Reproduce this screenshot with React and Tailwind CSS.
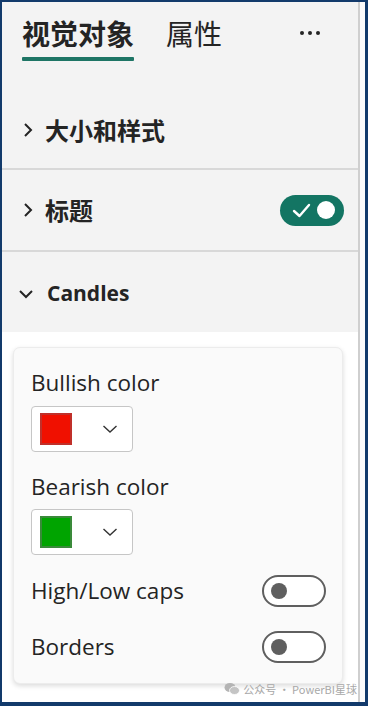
import React from "react";

const latin = { fontFamily: '"Open Sans", "Noto Sans CJK SC", sans-serif' };
const cjk = { fontFamily: '"Noto Sans CJK SC", "Noto Sans", sans-serif' };

function ChevronRight() {
  return (
    <svg width="12" height="16" viewBox="0 0 12 16" className="shrink-0">
      <path d="M3 2 L9 8 L3 14" fill="none" stroke="#242424" strokeWidth="2" />
    </svg>
  );
}

function ChevronDown() {
  return (
    <svg width="16" height="12" viewBox="0 0 16 12" className="shrink-0">
      <path d="M2 3 L8 9 L14 3" fill="none" stroke="#242424" strokeWidth="2" />
    </svg>
  );
}

function SmallChevron() {
  return (
    <svg width="16" height="10" viewBox="0 0 16 10" className="shrink-0">
      <path d="M1.5 2 L8 8 L14.5 2" fill="none" stroke="#333" strokeWidth="1.4" />
    </svg>
  );
}

function ToggleOn() {
  return (
    <div className="flex items-center justify-between w-[64px] h-[31px] rounded-full bg-[#137563] pl-[12px] pr-[9px]">
      <svg width="19" height="15" viewBox="0 0 19 15">
        <path d="M2 8 L7.5 13 L17 2" fill="none" stroke="#fff" strokeWidth="2.4" strokeLinecap="round" strokeLinejoin="round" />
      </svg>
      <div className="w-[18px] h-[18px] rounded-full bg-white" />
    </div>
  );
}

function ToggleOff() {
  return (
    <div className="flex items-center w-[64px] h-[32px] rounded-full border-2 border-[#5f5f5f] pl-[7px] bg-white">
      <div className="w-[16px] h-[16px] rounded-full bg-[#5f5f5f]" />
    </div>
  );
}

function ColorPicker({ fill, edge }) {
  return (
    <div className="flex items-center w-[102px] h-[46px] border border-[#c6c6c6] rounded-[4px] bg-white pl-[8px] pr-[14px] justify-between">
      <div className="w-[32px] h-[32px] border-2" style={{ background: fill, borderColor: edge }} />
      <SmallChevron />
    </div>
  );
}

export default function App() {
  return (
    <div className="w-[368px] h-[706px] bg-[#123a6b] flex pt-[2px] pl-[2px] pb-[4px] pr-[3px] overflow-hidden">
      <div className="flex flex-1 bg-white">
        <div className="w-[356px] flex flex-col relative">
          <div className="bg-[#f3f3f3] flex flex-col">
            {/* Tabs */}
            <div className="h-[90px] flex items-start pl-[20px] pr-[22px] pt-[12px]">
              <div className="flex flex-col">
                <span className="text-[28px] leading-[38px] font-bold text-[#242424]" style={cjk}>视觉对象</span>
                <div className="h-[4px] w-[112px] bg-[#1e7565] mt-[5px] rounded-[1px]" />
              </div>
              <span className="ml-[32px] text-[28px] leading-[38px] text-[#242424]" style={cjk}>属性</span>
              <div className="ml-auto mr-[16px] h-[38px] flex items-center gap-[4px]">
                <div className="w-[4px] h-[4px] rounded-full bg-[#242424]" />
                <div className="w-[4px] h-[4px] rounded-full bg-[#242424]" />
                <div className="w-[4px] h-[4px] rounded-full bg-[#242424]" />
              </div>
            </div>
            {/* Section 1 */}
            <div className="h-[78px] flex items-center pl-[20px] gap-[11px] border-b-2 border-[#d8d8d8]">
              <ChevronRight />
              <span className="text-[24px] font-bold text-[#242424]" style={cjk}>大小和样式</span>
            </div>
            {/* Section 2 */}
            <div className="h-[82px] flex items-center pl-[20px] pr-[14px] gap-[11px] border-b-2 border-[#d8d8d8]">
              <ChevronRight />
              <span className="text-[24px] font-bold text-[#242424]" style={cjk}>标题</span>
              <div className="ml-auto">
                <ToggleOn />
              </div>
            </div>
            {/* Section 3 header */}
            <div className="h-[80px] flex items-center pl-[16px] gap-[13px] pt-[4px]">
              <ChevronDown />
              <span className="text-[21px] font-bold text-[#242424]" style={latin}>Candles</span>
            </div>
          </div>
          {/* White area with card */}
          <div className="flex-1 bg-white px-[11px] pt-[15px]">
            <div className="w-[330px] bg-[#fafafa] rounded-[7px] border border-[#ececec] shadow-[0_2px_5px_rgba(0,0,0,0.14)] pt-[22px] pl-[17px] pr-[16px] pb-[20px] flex flex-col">
              <span className="text-[22.5px] leading-[26px] text-[#242424]" style={latin}>Bullish color</span>
              <div className="mt-[10px]">
                <ColorPicker fill="#f01000" edge="#c0302a" />
              </div>
              <span className="mt-[22px] text-[22.5px] leading-[26px] text-[#242424]" style={latin}>Bearish color</span>
              <div className="mt-[9px]">
                <ColorPicker fill="#00a400" edge="#3a8a3a" />
              </div>
              <div className="mt-[20px] flex items-center justify-between">
                <span className="text-[22.5px] leading-[26px] text-[#242424]" style={latin}>High/Low caps</span>
                <ToggleOff />
              </div>
              <div className="mt-[24px] flex items-center justify-between">
                <span className="text-[22.5px] leading-[26px] text-[#242424]" style={latin}>Borders</span>
                <ToggleOff />
              </div>
            </div>
          </div>
          {/* Watermark */}
          <div className="absolute right-[1px] bottom-[5px] flex items-center gap-[3px] text-[11px] text-[#a8a8a8]" style={cjk}>
            <svg width="16" height="13" viewBox="0 0 16 13">
              <ellipse cx="6" cy="5.5" rx="5.5" ry="4.6" fill="#b4b4b4" />
              <ellipse cx="10.5" cy="8.5" rx="5" ry="4" fill="#c4c4c4" stroke="#fff" strokeWidth="0.8" />
            </svg>
            <span>公众号 · PowerBI星球</span>
          </div>
        </div>
        <div className="w-[2px] bg-[#cfcfcf]" />
        <div className="flex-1 bg-[#fbfbfb]" />
      </div>
    </div>
  );
}
